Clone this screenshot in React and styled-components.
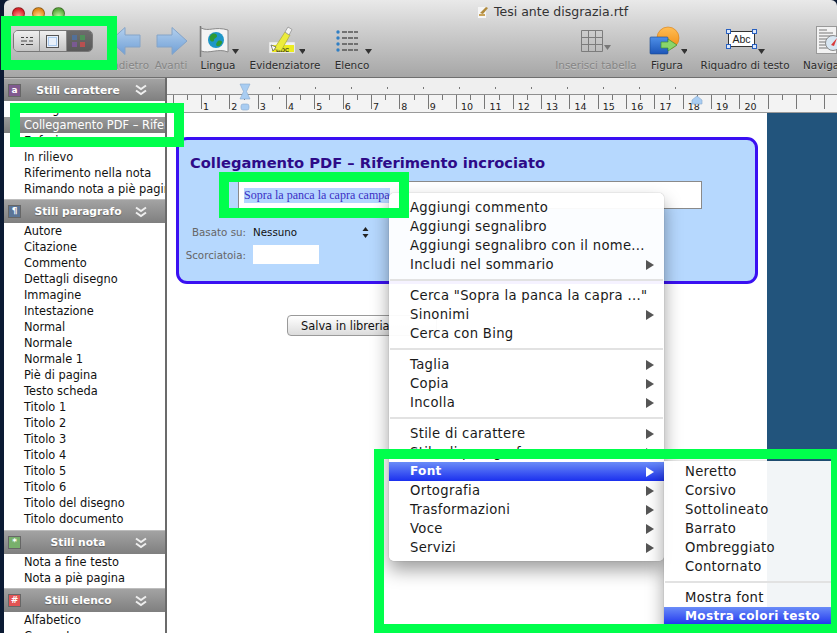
import React from 'react'
import styled, { createGlobalStyle } from 'styled-components'

const UI_FONT = `"DejaVu Sans", "Liberation Sans", sans-serif`

const GlobalStyle = createGlobalStyle`
  html, body {
    margin: 0;
    padding: 0;
    width: 837px;
    height: 633px;
    overflow: hidden;
    background: #0b1a33;
    font-family: ${UI_FONT};
  }
`

const Page = styled.div`
  position: relative;
  width: 837px;
  height: 633px;
  overflow: hidden;
  background: #0b1a33;
`

const Window = styled.div`
  margin-left: 4px;
  width: 833px;
  height: 633px;
  display: flex;
  flex-direction: column;
  border-radius: 6px 6px 0 0;
  overflow: hidden;
`

const Head = styled.header`
  flex: none;
  height: 78px;
  box-sizing: border-box;
  border-bottom: 1px solid #6f6f6f;
  background: linear-gradient(#e9e9e9 0%, #d4d4d4 30%, #bdbdbd 65%, #a6a6a6 100%);
`

const TitleBar = styled.div`
  position: relative;
  height: 26px;
  display: flex;
  align-items: center;
  padding-left: 8px;
  gap: 7px;
`

const Light = styled.span`
  width: 13px;
  height: 13px;
  border-radius: 50%;
  border: 1px solid rgba(0, 0, 0, 0.35);
  box-sizing: border-box;
  background: radial-gradient(circle at 50% 75%, ${p => p.$glow} 0%, ${p => p.$color} 70%);
`

const WindowTitle = styled.div`
  position: absolute;
  left: 473px;
  top: 4px;
  display: flex;
  align-items: center;
  gap: 5px;
  font-size: 12.5px;
  line-height: 16px;
  color: #333;
`

const Toolbar = styled.div`
  height: 51px;
  display: flex;
  padding-left: 9px;
`

const ViewSwitch = styled.div`
  flex: none;
  margin: 4px 15px 0 0;
  width: 80px;
  height: 22px;
  display: flex;
  border-radius: 5px;
  overflow: hidden;
  border: 1px solid #777;
  box-sizing: border-box;
`

const ViewButton = styled.div`
  flex: 1;
  display: flex;
  align-items: center;
  justify-content: center;
  background: ${p => (p.$on ? 'linear-gradient(#6c6c6c, #5a5a5a)' : 'linear-gradient(#efefef, #c4c4c4)')};
  & + & {
    border-left: 1px solid #8a8a8a;
  }
`

const ToolItem = styled.div`
  flex: none;
  width: ${p => p.$w}px;
  display: flex;
  flex-direction: column;
  align-items: center;
  white-space: nowrap;
`

const ToolIcon = styled.svg`
  display: block;
  width: ${p => p.$w || 40}px;
  height: 32px;
`

const ToolLabel = styled.span`
  font-size: 10.4px;
  line-height: 14px;
  color: ${p => (p.$off ? '#858585' : '#2b2b2b')};
  text-shadow: 0 1px 0 rgba(255, 255, 255, 0.3);
`

const Spacer = styled.div`
  flex: none;
  width: 170px;
`

const Body = styled.div`
  flex: 1;
  min-height: 0;
  display: flex;
`

const Sidebar = styled.aside`
  flex: none;
  width: 161px;
  background: #fff;
  border-right: 2px solid #6b6b6b;
  overflow: hidden;
`

const SectionHead = styled.div`
  height: ${p => p.$h || 24}px;
  box-sizing: border-box;
  display: flex;
  align-items: center;
  padding: 0 18px 0 4px;
  background: linear-gradient(#a3a3a3, #7f7f7f);
  border-top: 1px solid #bdbdbd;
`

const SectionBadge = styled.span`
  flex: none;
  width: 13px;
  height: 13px;
  display: flex;
  align-items: center;
  justify-content: center;
  box-sizing: border-box;
  border: 1px solid #666;
  background: ${p => p.$color};
  color: #fff;
  font-size: 9px;
  font-weight: bold;
  line-height: 1;
`

const SectionName = styled.span`
  flex: 1;
  text-align: center;
  color: #fff;
  font-size: 10.7px;
  font-weight: bold;
  text-shadow: 0 1px 1px rgba(0, 0, 0, 0.3);
`

const StyleList = styled.ul`
  margin: 0;
  padding: 0 0 ${p => p.$pad || 0}px;
  list-style: none;
`

const StyleRow = styled.li`
  height: 16px;
  line-height: 16px;
  padding-left: 20px;
  font-size: 11.4px;
  white-space: nowrap;
  overflow: hidden;
  color: ${p => (p.$on ? '#fff' : '#111')};
  background: ${p => (p.$on ? 'linear-gradient(#9a9a9a, #7c7c7c)' : 'none')};
`

const Main = styled.main`
  flex: 1;
  min-width: 0;
  display: flex;
  flex-direction: column;
`

const Ruler = styled.div`
  flex: none;
  height: 35px;
  background: linear-gradient(#efefef 0, #efefef 16px, #f3f3f3 16px, #f3f3f3 100%);
  border-bottom: 1px solid #9a9a9a;
  box-sizing: border-box;
`

const RulerDrawing = styled.svg`
  display: block;
  width: 670px;
  height: 35px;
`

const Desk = styled.div`
  flex: 1;
  display: flex;
  background: #22547c;
`

const Doc = styled.div`
  flex: none;
  width: 600px;
  box-sizing: border-box;
  padding: 24px 9px 0;
  background: #fff;
`

const StylePanel = styled.section`
  height: 147px;
  box-sizing: border-box;
  padding: 12px 11px 0;
  border: 3px solid #3a10f2;
  border-radius: 11px;
  background: #b6d8fe;
`

const PanelTitle = styled.h2`
  margin: 0;
  font-size: 14.7px;
  line-height: 22px;
  font-weight: bold;
  color: #2d0a88;
  white-space: nowrap;
`

const SampleInput = styled.div`
  margin: 7px 0 0 48px;
  width: 464px;
  height: 28px;
  box-sizing: border-box;
  padding-left: 5px;
  display: flex;
  align-items: center;
  background: #fff;
  border: 1px solid #8a8a8a;
  font-family: "Liberation Serif", serif;
  font-size: 12px;
  color: #3a2fc4;
`

const SelectedText = styled.span`
  background: #b5d5ff;
`

const FormRow = styled.div`
  margin: ${p => p.$top}px 0 0 -5px;
  display: flex;
  align-items: center;
  gap: 7px;
  height: ${p => p.$h}px;
`

const FormLabel = styled.label`
  width: 61px;
  text-align: right;
  font-size: 10.3px;
  color: #666;
  white-space: nowrap;
`

const SelectBox = styled.div`
  width: 116px;
  display: flex;
  align-items: center;
  justify-content: space-between;
  font-size: 10.3px;
  color: #111;
`

const ShortcutInput = styled.div`
  width: 66px;
  height: 19px;
  background: #fff;
`

const SaveButton = styled.button`
  display: block;
  margin: 31px 0 0 111px;
  width: 150px;
  height: 21px;
  box-sizing: border-box;
  padding: 0 0 0 13px;
  text-align: left;
  font-family: ${UI_FONT};
  font-size: 11.4px;
  color: #111;
  border: 1px solid #9a9a9a;
  border-radius: 4px;
  background: linear-gradient(#fff, #dcdcdc);
`

const Menu = styled.div`
  position: absolute;
  left: 389px;
  top: 193px;
  width: 275px;
  box-sizing: border-box;
  padding: 5px 0 4px;
  background: rgba(255, 255, 255, 0.95);
  border-radius: 5px;
  box-shadow: 0 0 1px rgba(0, 0, 0, 0.45), 0 9px 18px rgba(0, 0, 0, 0.38);
  font-size: 13.2px;
  letter-spacing: 0.3px;
`

const SubMenu = styled(Menu)`
  left: 100%;
  top: 268px;
  width: 172px;
  padding: 1px 0 5px;
  border-radius: 0 5px 5px 0;
  background: rgba(255, 255, 255, 0.94);
`

const MenuRow = styled.div`
  height: 19px;
  line-height: 19px;
  display: flex;
  justify-content: space-between;
  align-items: center;
  padding: 0 10px 0 21px;
  white-space: nowrap;
  color: ${p => (p.$on ? '#fff' : '#1a1a1a')};
  font-weight: ${p => (p.$on ? 'bold' : 'normal')};
  font-size: ${p => (p.$on ? '12.1px' : 'inherit')};
  background: ${p => (p.$on ? 'linear-gradient(#6a8cf8, #1b30ee)' : 'none')};
`

const MenuArrow = styled.span`
  flex: none;
  width: 0;
  height: 0;
  border-left: 8px solid ${p => (p.$on ? '#fff' : '#555')};
  border-top: 5px solid transparent;
  border-bottom: 5px solid transparent;
`

const MenuLine = styled.div`
  height: 2px;
  margin: 5px 1px;
  background: #e2e2e2;
`

// green marks drawn on the screenshot by its author
const Mark = styled.div`
  position: absolute;
  box-sizing: border-box;
  border: 10px solid #00ff4c;
  pointer-events: none;
`

const ViewMark = styled(Mark)`
  left: 1px;
  top: 16px;
  width: 116px;
  height: 54px;
`

const StyleMark = styled(Mark)`
  left: 10px;
  top: 103px;
  width: 174px;
  height: 44px;
`

const TextMark = styled(Mark)`
  left: 219px;
  top: 172px;
  width: 190px;
  height: 46px;
`

const MenuMark = styled(Mark)`
  left: 374px;
  top: 449px;
  width: 463px;
  height: 184px;
  border-right-width: 6px;
  border-bottom-width: 9px;
`

function DropMark({ x, y, color = '#333' }) {
  return <path d={`M${x - 3} ${y - 3}h7l-3.500 5z`} fill={color} />
}

function ArrowDefs() {
  return (
    <svg width="0" height="0" style={{ position: 'absolute' }}>
      <defs>
        <linearGradient id="navBlue" x1="0" y1="0" x2="0" y2="1">
          <stop offset="0" stopColor="#b4d0ee" />
          <stop offset="1" stopColor="#6f9fd6" />
        </linearGradient>
        <linearGradient id="sunFill" x1="0" y1="0" x2="0" y2="1">
          <stop offset="0" stopColor="#ffbe55" />
          <stop offset="1" stopColor="#f08a10" />
        </linearGradient>
        <linearGradient id="boxBlue" x1="0" y1="0" x2="0" y2="1">
          <stop offset="0" stopColor="#4f90e8" />
          <stop offset="1" stopColor="#1c55b8" />
        </linearGradient>
      </defs>
    </svg>
  )
}

function BackIcon() {
  return (
    <ToolIcon viewBox="0 0 40 32">
      <path d="M1 15 16 1.500v7.500h15v12H16v7.500z" fill="url(#navBlue)" stroke="#84a4c8" />
    </ToolIcon>
  )
}

function ForwardIcon() {
  return (
    <ToolIcon viewBox="0 0 40 32">
      <path d="M36 15 21 1.500v7.500H6v12h15v7.500z" fill="url(#navBlue)" stroke="#84a4c8" />
    </ToolIcon>
  )
}

function FlagIcon() {
  return (
    <ToolIcon $w={44} viewBox="0 0 44 32">
      <path d="M4.500 0v31" stroke="#777" strokeWidth="1.500" />
      <path d="M5 2c8 4 14-2 27 2v22c-10-4-18 2-27-1z" fill="#f4f4f4" stroke="#888" />
      <circle cx="20" cy="14" r="8" fill="#1e96c8" />
      <path d="M16 8c3-1 5 0 5 2s-3 2-3 4-3 2-4 0 0-5 2-6zM22 15c2-1 5 0 4 2s-3 4-5 3 0-4 1-5z" fill="#2f9a34" />
      <DropMark x={39} y={26} />
    </ToolIcon>
  )
}

function HighlighterIcon() {
  return (
    <ToolIcon viewBox="0 0 40 32">
      <rect x="4" y="16" width="26" height="11" fill="#f1f1f1" stroke="#c8c8c8" strokeWidth="0.500" />
      <rect x="7" y="19" width="22" height="7" fill="#ecec20" />
      <text x="11" y="25.500" fontSize="8" fontFamily="Liberation Sans, sans-serif" fill="#222">abc</text>
      <path d="M9 23 20 6l5 3-9 16z" fill="#ecec3c" stroke="#a8a838" strokeWidth="0.700" />
      <path d="M20 6l3-5 4 2.500-3 5.500z" fill="#f4f4f4" stroke="#888" strokeWidth="0.700" />
      <path d="M6 19l5 2-3 4z" fill="#fff" stroke="#555" strokeWidth="0.700" />
      <DropMark x={37} y={26} />
    </ToolIcon>
  )
}

function ListIcon() {
  const rows = [6, 12, 18, 24]
  return (
    <ToolIcon viewBox="0 0 40 32">
      {rows.map(y => (
        <g key={y}>
          <circle cx="6" cy={y} r="1.700" fill="#2f7fc4" />
          <path d={`M10 ${y}h16`} stroke="#555" strokeWidth="1.600" strokeDasharray="5 1" />
        </g>
      ))}
      <DropMark x={36} y={26} />
    </ToolIcon>
  )
}

function TableIcon() {
  return (
    <ToolIcon viewBox="0 0 40 32">
      <path d="M5.500 4.500h21v21h-21zM12.500 4.500v21M19.500 4.500v21M5.500 11.500h21M5.500 18.500h21" fill="none" stroke="#7c7c7c" />
      <DropMark x={31} y={22} color="#777" />
    </ToolIcon>
  )
}

function PictureIcon() {
  return (
    <ToolIcon viewBox="0 0 40 32">
      <circle cx="21" cy="12" r="11" fill="url(#sunFill)" stroke="#d97c10" strokeWidth="0.600" />
      <rect x="3" y="11" width="18" height="17" rx="1" fill="url(#boxBlue)" stroke="#1a468f" strokeWidth="0.600" />
      <path d="M14 16h7v-3l9 6-9 6v-3h-7z" fill="#8ad66a" stroke="#3d8f36" strokeWidth="0.700" />
      <DropMark x={37} y={26} />
    </ToolIcon>
  )
}

function TextBoxIcon() {
  return (
    <ToolIcon viewBox="0 0 40 32">
      <rect x="3.500" y="5.500" width="26" height="15" fill="#fff" stroke="#333" />
      <text x="7.500" y="17" fontSize="10.500" fontFamily="Liberation Sans, sans-serif" fill="#222">Abc</text>
      {[[3.500, 5.500], [29.500, 5.500], [3.500, 20.500], [29.500, 20.500]].map(([x, y]) => (
        <rect key={x + '-' + y} x={x - 2} y={y - 2} width="4" height="4" fill="#dce8fa" stroke="#2860c0" />
      ))}
      <DropMark x={36} y={26} />
    </ToolIcon>
  )
}

function NavigatorIcon() {
  return (
    <ToolIcon $w={44} viewBox="0 0 44 32">
      <rect x="3.500" y="0.500" width="20" height="27" fill="#f2f2f2" stroke="#999" />
      <path d="M6 4h8M6 7h14M6 10h14M6 13h11M6 16h11M6 19h11M6 22h11" stroke="#777" />
      <circle cx="20" cy="17" r="7.500" fill="#d8e6f2" stroke="#8a8a8a" />
      <path d="m18 19 6-7-3 8z" fill="#d83a3a" />
    </ToolIcon>
  )
}

function DocGlyph() {
  return (
    <svg width="12" height="14" viewBox="0 0 12 14">
      <path d="M1 2h8v11H1z" fill="#f6f6f6" />
      <path d="M3 8 9 2l2 1-5 6z" fill="#b08a3c" />
      <path d="M2 9h6v2H2z" fill="#c9a35a" />
    </svg>
  )
}

function RulerMarks() {
  const first = 201
  const step = 14.17
  const ticks = []
  for (let i = -2; i < 46; i++) ticks.push(first + i * step)
  const dots = []
  for (let x = 279; x <= 675; x += 36) dots.push(x)
  const numbers = []
  for (let n = 1; n <= 20; n++) numbers.push(n)

  return (
    <RulerDrawing viewBox="167 78 670 35">
      <path d="M167 94.500h670" stroke="#8e8e8e" />
      {dots.map(x => (
        <rect key={x} x={x} y="87" width="1" height="2" fill="#777" />
      ))}
      {ticks.map((x, i) => (
        <path
          key={i}
          d={`M${Math.round(x) + 0.5} 95v${i % 2 === 0 ? 14 : 5}`}
          stroke="#777"
        />
      ))}
      {numbers.map(n => (
        <text
          key={n}
          x={first + 5 + (n - 1) * step * 2}
          y="110"
          fontSize="9.500"
          fontFamily="DejaVu Sans, sans-serif"
          textAnchor={n > 9 ? 'start' : 'middle'}
          fill="#222"
        >
          {n}
        </text>
      ))}
      <path d="M240 84h10l-3.500 7.500 3.500 7.500h-10l3.500-7.500z" fill="#a9cdf2" stroke="#88a9cf" strokeWidth="0.600" />
      <rect x="241" y="104" width="8" height="6" rx="2" fill="#a9cdf2" stroke="#88a9cf" strokeWidth="0.600" />
      <path d="M692 104v-4l5-4 5 4v4z" fill="#a9cdf2" stroke="#88a9cf" strokeWidth="0.600" />
    </RulerDrawing>
  )
}

const SECTIONS = [
  {
    name: 'Stili carattere',
    badge: 'a',
    color: '#80598f',
    h: 23,
    pad: 2,
    items: ['Collegamento', 'Collegamento PDF – Riferimento incrociato', 'Enfasi', 'In rilievo', 'Riferimento nella nota', 'Rimando nota a piè pagina'],
  },
  {
    name: 'Stili paragrafo',
    badge: '¶',
    color: '#5b7596',
    pad: 3,
    items: [
      'Autore', 'Citazione', 'Commento', 'Dettagli disegno', 'Immagine', 'Intestazione', 'Normal', 'Normale', 'Normale 1',
      'Piè di pagina', 'Testo scheda', 'Titolo 1', 'Titolo 2', 'Titolo 3', 'Titolo 4', 'Titolo 5', 'Titolo 6',
      'Titolo del disegno', 'Titolo documento',
    ],
  },
  { name: 'Stili nota', badge: '*', color: '#78b06c', pad: 2, items: ['Nota a fine testo', 'Nota a piè pagina'] },
  { name: 'Stili elenco', badge: '#', color: '#e25454', items: ['Alfabetico', 'Consueto'] },
]

const MENU = [
  ['Aggiungi commento'],
  ['Aggiungi segnalibro'],
  ['Aggiungi segnalibro con il nome...'],
  ['Includi nel sommario', true],
  null,
  ['Cerca "Sopra la panca la capra ..."'],
  ['Sinonimi', true],
  ['Cerca con Bing'],
  null,
  ['Taglia', true],
  ['Copia', true],
  ['Incolla', true],
  null,
  ['Stile di carattere', true],
  ['Stile di paragrafo', true],
  ['Font', true, true],
  ['Ortografia', true],
  ['Trasformazioni', true],
  ['Voce', true],
  ['Servizi', true],
]

const FONT_MENU = [
  ['Neretto'],
  ['Corsivo'],
  ['Sottolineato'],
  ['Barrato'],
  ['Ombreggiato'],
  ['Contornato'],
  null,
  ['Mostra font'],
  ['Mostra colori testo', false, true],
]

function MenuRows({ rows }) {
  return rows.map((row, i) => {
    if (!row) return <MenuLine key={i} />
    const [label, arrow, on] = row
    return (
      <MenuRow key={label} $on={on}>
        {label}
        {arrow && <MenuArrow $on={on} />}
      </MenuRow>
    )
  })
}

export default function App() {
  return (
    <Page>
      <GlobalStyle />
      <ArrowDefs />
      <Window>
        <Head>
          <TitleBar>
            <Light $color="#d8252a" $glow="#ff9a90" />
            <Light $color="#e08a1c" $glow="#ffd890" />
            <Light $color="#5aa83c" $glow="#c4f0a0" />
            <WindowTitle>
              <DocGlyph />
              Tesi ante disgrazia.rtf
            </WindowTitle>
          </TitleBar>
          <Toolbar>
            <ViewSwitch>
              <ViewButton>
                <svg width="14" height="10" viewBox="0 0 14 10">
                  <path d="M1 1.500h3M6 1.500h2M10 1.500h3M1 5h6M9 5h4M1 8.500h3M6 8.500h7" stroke="#444" />
                </svg>
              </ViewButton>
              <ViewButton>
                <svg width="13" height="13" viewBox="0 0 13 13">
                  <rect x="0.500" y="0.500" width="12" height="12" fill="#e8f0fa" stroke="#555" />
                  <rect x="2.500" y="2.500" width="8" height="8" fill="none" stroke="#6ea4e0" strokeDasharray="1 1" />
                </svg>
              </ViewButton>
              <ViewButton $on>
                <svg width="14" height="14" viewBox="0 0 14 14">
                  <rect x="0" y="1" width="5" height="5" fill="#52709a" />
                  <rect x="8" y="1" width="5" height="5" fill="#4f8f5a" />
                  <rect x="0" y="8" width="5" height="5" fill="#7a5a92" />
                  <rect x="8" y="8" width="5" height="5" fill="#b85050" />
                </svg>
              </ViewButton>
            </ViewSwitch>
            <ToolItem $w={42}>
              <BackIcon />
              <ToolLabel $off>Indietro</ToolLabel>
            </ToolItem>
            <ToolItem $w={42}>
              <ForwardIcon />
              <ToolLabel $off>Avanti</ToolLabel>
            </ToolItem>
            <ToolItem $w={52}>
              <FlagIcon />
              <ToolLabel>Lingua</ToolLabel>
            </ToolItem>
            <ToolItem $w={82}>
              <HighlighterIcon />
              <ToolLabel>Evidenziatore</ToolLabel>
            </ToolItem>
            <ToolItem $w={52}>
              <ListIcon />
              <ToolLabel>Elenco</ToolLabel>
            </ToolItem>
            <Spacer />
            <ToolItem $w={96}>
              <TableIcon />
              <ToolLabel $off>Inserisci tabella</ToolLabel>
            </ToolItem>
            <ToolItem $w={46}>
              <PictureIcon />
              <ToolLabel>Figura</ToolLabel>
            </ToolItem>
            <ToolItem $w={110}>
              <TextBoxIcon />
              <ToolLabel>Riquadro di testo</ToolLabel>
            </ToolItem>
            <ToolItem $w={70}>
              <NavigatorIcon />
              <ToolLabel>Navigazione</ToolLabel>
            </ToolItem>
          </Toolbar>
        </Head>
        <Body>
          <Sidebar>
            {SECTIONS.map(section => (
              <div key={section.name}>
                <SectionHead $h={section.h}>
                  <SectionBadge $color={section.color}>{section.badge}</SectionBadge>
                  <SectionName>{section.name}</SectionName>
                  <svg width="12" height="12" viewBox="0 0 12 12">
                    <path d="M1 1.500 6 5l5-3.500M1 6.500 6 10l5-3.500" fill="none" stroke="#eee" strokeWidth="2" />
                  </svg>
                </SectionHead>
                <StyleList $pad={section.pad}>
                  {section.items.map(item => (
                    <StyleRow key={item} $on={item.startsWith('Collegamento PDF')}>
                      {item}
                    </StyleRow>
                  ))}
                </StyleList>
              </div>
            ))}
          </Sidebar>
          <Main>
            <Ruler>
              <RulerMarks />
            </Ruler>
            <Desk>
              <Doc>
                <StylePanel>
                  <PanelTitle>Collegamento PDF – Riferimento incrociato</PanelTitle>
                  <SampleInput>
                    <SelectedText>Sopra la panca la capra campa</SelectedText>
                  </SampleInput>
                  <FormRow $top={13} $h={20}>
                    <FormLabel>Basato su:</FormLabel>
                    <SelectBox>
                      Nessuno
                      <svg width="7" height="11" viewBox="0 0 7 11">
                        <path d="M3.500 0 6.500 4h-6zM3.500 11 6.500 7h-6z" fill="#222" />
                      </svg>
                    </SelectBox>
                  </FormRow>
                  <FormRow $top={3} $h={19}>
                    <FormLabel>Scorciatoia:</FormLabel>
                    <ShortcutInput />
                  </FormRow>
                </StylePanel>
                <SaveButton>Salva in libreria</SaveButton>
              </Doc>
            </Desk>
          </Main>
        </Body>
      </Window>
      <Menu>
        <MenuRows rows={MENU} />
        <SubMenu>
          <MenuRows rows={FONT_MENU} />
        </SubMenu>
      </Menu>
      <ViewMark />
      <StyleMark />
      <TextMark />
      <MenuMark />
    </Page>
  )
}
